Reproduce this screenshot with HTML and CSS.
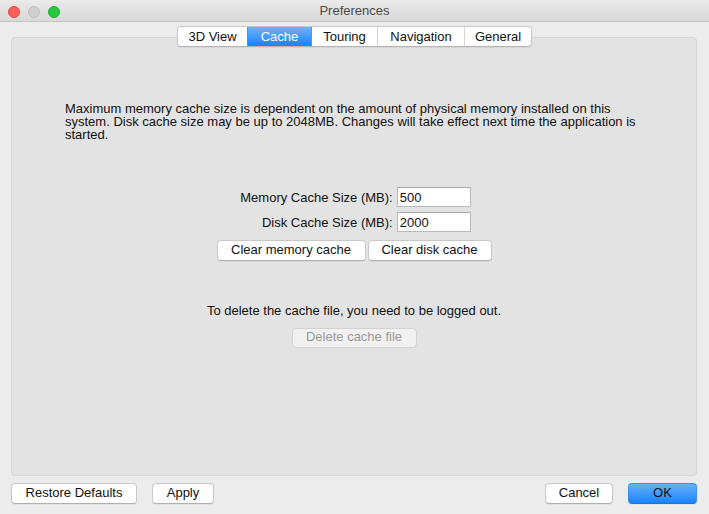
FILE: index.html
```html
<!DOCTYPE html>
<html lang="en">
<head>
<meta charset="utf-8">
<title>Preferences</title>
<link rel="stylesheet" href="styles.css">
</head>
<body>
<div class="window">
  <header class="titlebar">
    <div class="lights">
      <span class="light red"></span>
      <span class="light gray"></span>
      <span class="light green"></span>
    </div>
    <div class="title">Preferences</div>
    <div></div>
  </header>
  <main class="content">
    <nav class="tabs">
      <span class="tab">3D View</span>
      <span class="tab active">Cache</span>
      <span class="tab">Touring</span>
      <span class="tab">Navigation</span>
      <span class="tab">General</span>
    </nav>
    <section class="panel">
      <p class="intro">Maximum memory cache size is dependent on the amount of physical memory installed on this<br>system. Disk cache size may be up to 2048MB. Changes will take effect next time the application is<br>started.</p>
      <div class="form">
        <label class="label" for="mem">Memory Cache Size (MB):</label>
        <input class="field" id="mem" type="text" value="500">
        <label class="label" for="disk">Disk Cache Size (MB):</label>
        <input class="field" id="disk" type="text" value="2000">
      </div>
      <div class="btn-row">
        <button class="btn clear-mem">Clear memory cache</button>
        <button class="btn clear-disk">Clear disk cache</button>
      </div>
      <p class="note">To delete the cache file, you need to be logged out.</p>
      <button class="btn disabled delete" disabled>Delete cache file</button>
    </section>
    <footer class="actions">
      <div class="left">
        <button class="btn restore">Restore Defaults</button>
        <button class="btn apply">Apply</button>
      </div>
      <div class="right">
        <button class="btn cancel">Cancel</button>
        <button class="btn primary ok">OK</button>
      </div>
    </footer>
  </main>
</div>
</body>
</html>
```

FILE: styles.css
```css
* { box-sizing: border-box; }

html, body {
  margin: 0;
  padding: 0;
}

body {
  width: 709px;
  height: 514px;
  background: #ececec;
  font-family: "Liberation Sans", Arial, sans-serif;
  font-size: 13px;
  color: #111;
  overflow: hidden;
}

.window {
  width: 709px;
  height: 514px;
  display: flex;
  flex-direction: column;
  background: #ececec;
}

.titlebar {
  height: 22px;
  display: grid;
  grid-template-columns: 1fr auto 1fr;
  align-items: center;
  background: linear-gradient(#ebebeb, #d8d8d8);
  border-bottom: 1px solid #c4c4c4;
}

.lights {
  display: flex;
  gap: 8px;
  padding-left: 8px;
  padding-top: 1px;
}

.light {
  width: 12px;
  height: 12px;
  border-radius: 50%;
  display: block;
}

.light.red { background: #fc5f57; border: 1px solid #e0443e; }
.light.gray { background: #d0d0d0; border: 1px solid #bdbdbd; }
.light.green { background: #28c840; border: 1px solid #1fab31; }

.title {
  color: #4a4a4a;
  font-size: 13px;
  line-height: 22px;
}

.content {
  display: flex;
  flex-direction: column;
  flex: 1;
}

.tabs {
  align-self: center;
  display: flex;
  margin-top: 4px;
  margin-bottom: -10px;
  height: 21px;
  background: #fff;
  border: 1px solid #c6c6c6;
  border-bottom-color: #b4b4b4;
  border-radius: 4px;
  position: relative;
  z-index: 1;
  overflow: hidden;
  box-shadow: 0 1px 1px rgba(0,0,0,0.06);
}

.tab {
  display: flex;
  align-items: center;
  justify-content: center;
  height: 19px;
  padding: 0;
  white-space: nowrap;
  border-left: 1px solid #d4d4d4;
  color: #111;
  line-height: 19px;
}

.tab:first-child { border-left: none; width: 69px; }
.tab:nth-child(2) { width: 64px; }
.tab:nth-child(3) { width: 66px; }
.tab:nth-child(4) { width: 87px; }
.tab:nth-child(5) { width: 67px; }

.tab.active {
  background: linear-gradient(#6db3fb, #1a82fb);
  color: #fff;
  border-left-color: #4c98f0;
}

.tab.active + .tab { border-left-color: #4c98f0; }

.panel {
  margin: 0 12px 0 11px;
  height: 439px;
  background: #e3e3e3;
  border: 1px solid #d6d6d6;
  border-radius: 4px;
  padding: 64px 53px 0;
  display: flex;
  flex-direction: column;
  align-items: center;
}

.intro {
  align-self: stretch;
  margin: 0;
  line-height: 13px;
  color: #111;
}

.form {
  margin-top: 46px;
  display: grid;
  grid-template-columns: auto 74px;
  grid-auto-rows: 20px;
  column-gap: 4px;
  row-gap: 5px;
  align-items: center;
  padding-left: 3px;
}

.label {
  text-align: right;
  color: #111;
  white-space: nowrap;
}

.field {
  width: 74px;
  height: 20px;
  border: 1px solid #b9b9b9;
  border-top-color: #a9a9a9;
  background: #fff;
  font-family: "Liberation Sans", Arial, sans-serif;
  font-size: 13px;
  color: #111;
  padding: 0 2px;
  margin: 0;
  outline: none;
}

.btn-row {
  margin-top: 8px;
  display: flex;
  gap: 2px;
}

.btn {
  font-family: "Liberation Sans", Arial, sans-serif;
  font-size: 13px;
  color: #111;
  background: #fff;
  border: 1px solid #c8c8c8;
  border-bottom-color: #b0b0b0;
  border-radius: 4px;
  height: 21px;
  padding: 0 0 2px;
  margin: 0;
  line-height: 16px;
  white-space: nowrap;
  text-align: center;
  box-shadow: 0 1px 0 rgba(0,0,0,0.04);
}

.clear-mem { width: 149px; }
.clear-disk { width: 124px; }

.note {
  margin: 43px 0 0;
  line-height: 14px;
  color: #111;
}

.btn.disabled {
  margin-top: 10px;
  width: 125px;
  height: 20px;
  background: #f1f1f1;
  color: #999;
  border-color: #d2d2d2;
  box-shadow: none;
}

.actions {
  margin-top: 7px;
  padding: 0 12px 0 11px;
  display: flex;
  justify-content: space-between;
}

.left, .right {
  display: flex;
}

.restore { width: 126px; }
.apply { width: 62px; margin-left: 15px; }
.cancel { width: 68px; }
.ok { width: 69px; margin-left: 15px; }

.btn.primary {
  background: linear-gradient(#68b1fb, #1a82fb);
  border-color: #3b8ef0;
  border-bottom-color: #1f72d9;
  color: #111;
}
```
